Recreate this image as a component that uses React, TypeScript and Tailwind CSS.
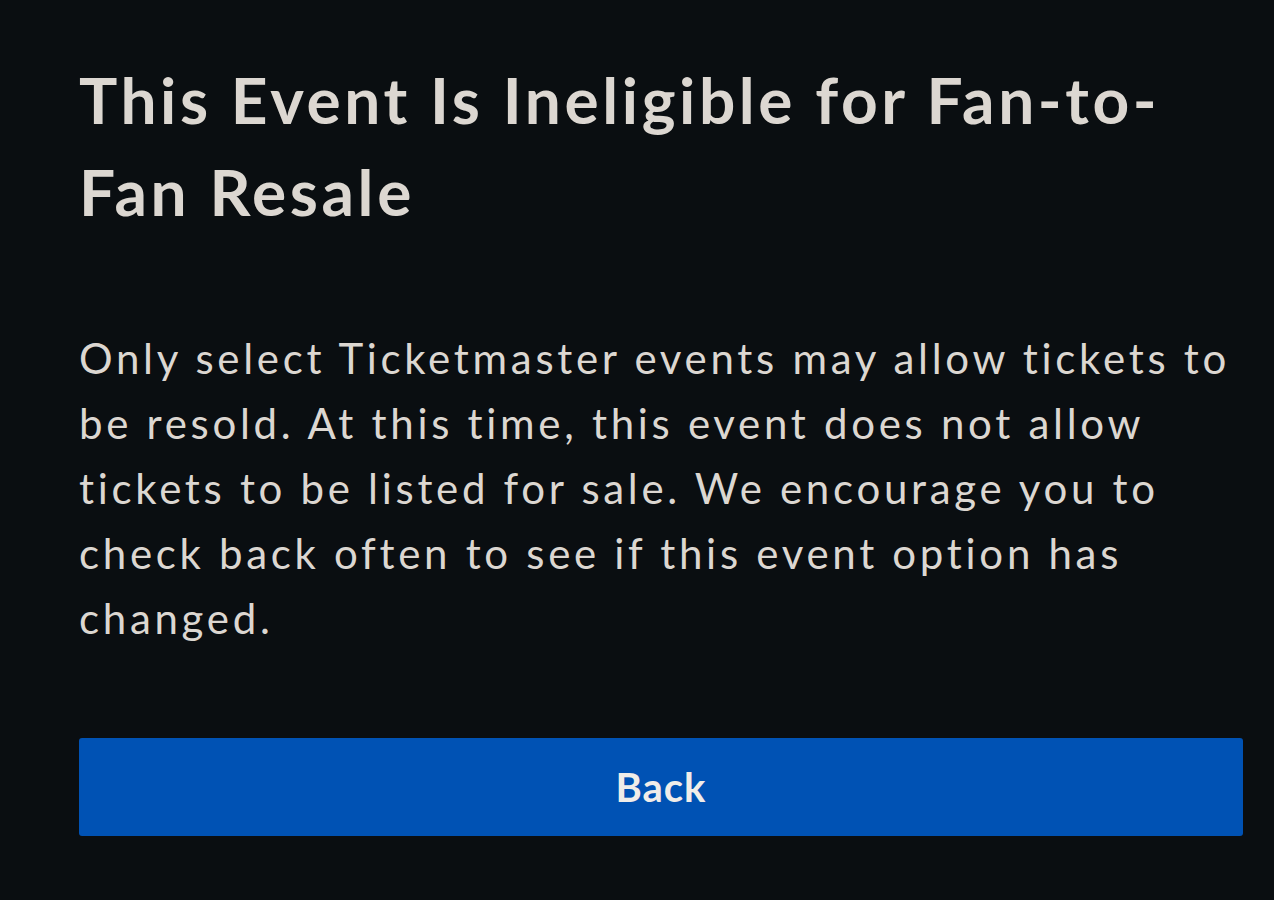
export default function App() {
  return (
    <div className="min-h-[900px] w-full bg-[#0a0e11] font-['Lato',sans-serif] text-[#dcd7d1]">
      <div className="pl-[79px] pr-[31px] pt-[54px]">
        <h1 className="text-[64px] font-bold leading-[92px] tracking-[3.6px]">
          This Event Is Ineligible for Fan-to-Fan Resale
        </h1>
        <p className="mt-[88px] text-[42px] leading-[65px] tracking-[3.7px]">
          Only select Ticketmaster events may allow tickets to be resold. At this time, this event does not allow
          tickets to be listed for sale. We encourage you to check back often to see if this event option has
          changed.
        </p>
        <button className="mt-[87px] h-[98px] w-full rounded-[3px] bg-[#0052b4] text-[40px] font-bold tracking-[1px] text-[#f0ede9]">
          Back
        </button>
      </div>
    </div>
  );
}
